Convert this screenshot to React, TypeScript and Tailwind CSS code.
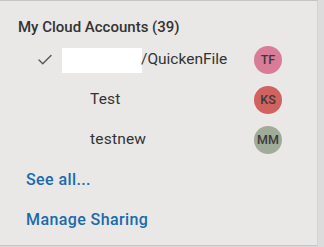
import { Check } from 'lucide-react'

const ROWS = [
  { name: '/QuickenFile', initials: 'TF', color: 'bg-[#d97c98]', checked: true, masked: true },
  { name: 'Test', initials: 'KS', color: 'bg-[#d0625f]', checked: false, masked: false },
  { name: 'testnew', initials: 'MM', color: 'bg-[#a1ab99]', checked: false, masked: false },
]

export default function App() {
  return (
    <div className="w-[324px] h-[247px] flex bg-[#dcdcdc] overflow-hidden" style={{ fontFamily: 'Roboto, "Noto Sans", sans-serif' }}>
      <div className="w-[318px] h-[246px] flex flex-col bg-[#e9e8e6] border-t border-b border-[#c4c4c4] border-r border-r-[#d2d2d2]">
        {/* Header */}
        <div className="h-[39px] pl-[18px] pt-[16px] text-[15px] font-medium text-[#333] leading-5">
          My Cloud Accounts (39)
        </div>

        {/* Accounts */}
        {ROWS.map(r => (
          <div key={r.initials} className="h-10 flex items-center">
            <div className="w-[62px] pl-[36px] flex items-center text-[#555]">
              {r.checked && <Check size={18} strokeWidth={1.8} />}
            </div>
            <div className="flex-1 flex items-center text-[15.5px] text-[#333]">
              {r.masked ? (
                <>
                  <span className="w-[80px] h-[25px] bg-white" />
                  <span className="-ml-px">{r.name}</span>
                </>
              ) : (
                <span className="pl-7 tracking-[0.2px]">{r.name}</span>
              )}
            </div>
            <div className={`w-7 h-7 mr-[35px] rounded-full ${r.color} flex items-center justify-center text-[12.5px] font-medium text-[#3a3a3a]`}>
              {r.initials}
            </div>
          </div>
        ))}

        {/* Links */}
        <div className="h-10 flex items-center pl-[26px] text-[16px] tracking-[0.4px] font-medium text-[#1b6aab]">See all...</div>
        <div className="h-10 flex items-center pl-[26px] text-[16px] tracking-[0.4px] font-medium text-[#1b6aab]">Manage Sharing</div>
      </div>
    </div>
  )
}
